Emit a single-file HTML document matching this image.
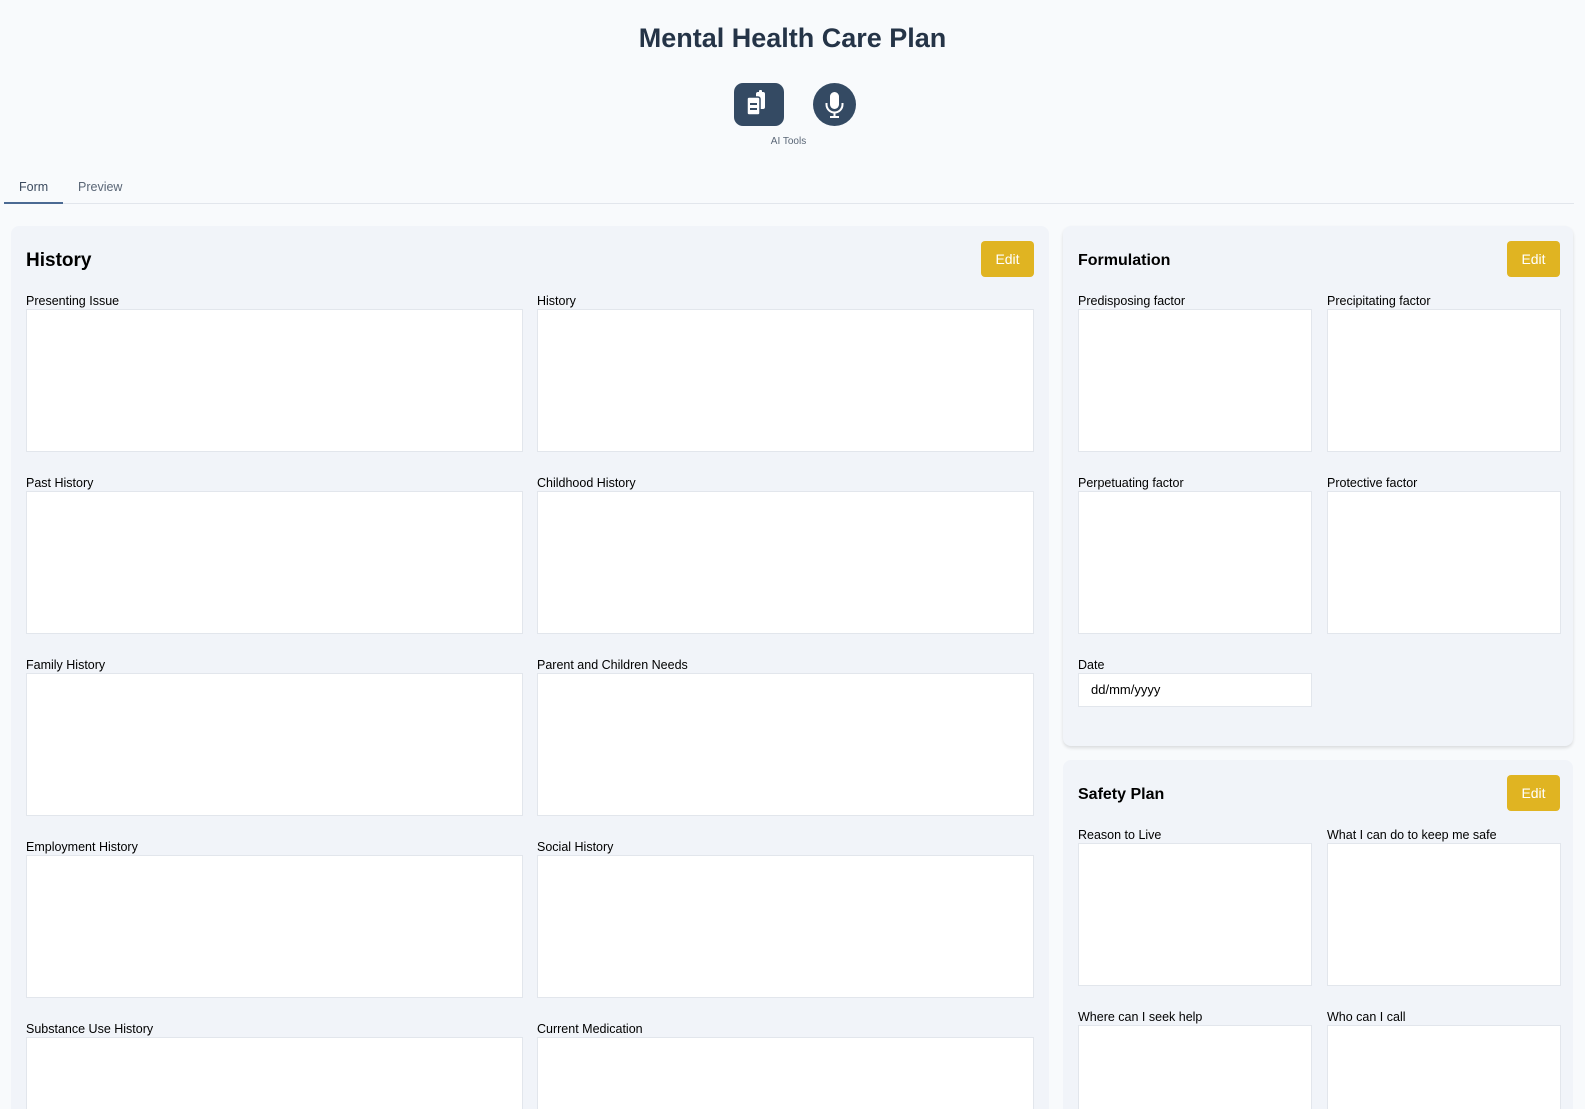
<!DOCTYPE html>
<html><head><meta charset="utf-8"><style>
*{box-sizing:border-box;margin:0;padding:0}
html,body{width:1585px;height:1109px;overflow:hidden}
body{background:#f8fafc;font-family:"Liberation Sans",sans-serif;color:#000}
#w{position:relative;width:1585px;height:1109px;overflow:hidden}
.a{position:absolute}
h1{position:absolute;left:0;width:1585px;text-align:center;top:20px;font-size:27px;font-weight:bold;color:#253447;line-height:36px}
.card{position:absolute;background:#f1f4f9;border-radius:8px}
.t{position:absolute;font-weight:bold;font-size:16px;line-height:20px}
.edit{position:absolute;width:53px;height:36px;background:#e0b422;color:#fff;border-radius:4px;font-size:14px;text-align:center;line-height:36px}
.lbl{position:absolute;font-size:12.5px;line-height:16px}
.box{position:absolute;background:#fff;border:1px solid #e2e6ec;height:143px}
</style></head><body><div id="w">
<h1>Mental Health Care Plan</h1>
<div class="a" style="left:734px;top:83px;width:50px;height:43px;background:#344a63;border-radius:9px">
<svg width="50" height="43" viewBox="0 0 50 43"><rect x="22" y="9" width="9" height="17" rx="2" fill="#fff"/><rect x="25" y="7" width="3" height="4" rx="1" fill="#fff"/><rect x="13" y="14" width="13" height="18" rx="2" fill="#fff" stroke="#344a63" stroke-width="1.5"/><rect x="16" y="20" width="7" height="2" fill="#344a63"/><rect x="16" y="25" width="7" height="2" fill="#344a63"/></svg></div>
<div class="a" style="left:813px;top:83px;width:43px;height:43px;background:#344a63;border-radius:50%">
<svg width="43" height="43" viewBox="0 0 43 43"><rect x="17" y="9" width="9" height="17" rx="4.5" fill="#fff"/><path d="M13.5 20v1.5a8 8 0 0 0 16 0V20" fill="none" stroke="#fff" stroke-width="2"/><path d="M21.5 29.5v4M17 34h9" stroke="#fff" stroke-width="2"/></svg></div>
<div class="a" style="left:0;width:1577px;text-align:center;top:136px;font-size:10px;color:#5a6676">AI Tools</div>
<div class="a" style="left:19px;top:180px;font-size:12.5px;color:#3b4a5e">Form</div>
<div class="a" style="left:78px;top:180px;font-size:12.5px;color:#5a6676">Preview</div>
<div class="a" style="left:4px;top:203px;width:1570px;height:1px;background:#e2e6ec"></div>
<div class="a" style="left:4px;top:202px;width:59px;height:2px;background:#4b6a93"></div>

<div class="card" style="left:11px;top:226px;width:1038px;height:950px"></div>
<div class="t" style="left:26px;top:249px;font-size:19px;line-height:24px">History</div>
<div class="edit" style="left:981px;top:241px">Edit</div>

<div class="lbl" style="left:26px;top:293px">Presenting Issue</div><div class="box" style="left:26px;top:309px;width:497px"></div>
<div class="lbl" style="left:537px;top:293px">History</div><div class="box" style="left:537px;top:309px;width:497px"></div>
<div class="lbl" style="left:26px;top:475px">Past History</div><div class="box" style="left:26px;top:491px;width:497px"></div>
<div class="lbl" style="left:537px;top:475px">Childhood History</div><div class="box" style="left:537px;top:491px;width:497px"></div>
<div class="lbl" style="left:26px;top:657px">Family History</div><div class="box" style="left:26px;top:673px;width:497px"></div>
<div class="lbl" style="left:537px;top:657px">Parent and Children Needs</div><div class="box" style="left:537px;top:673px;width:497px"></div>
<div class="lbl" style="left:26px;top:839px">Employment History</div><div class="box" style="left:26px;top:855px;width:497px"></div>
<div class="lbl" style="left:537px;top:839px">Social History</div><div class="box" style="left:537px;top:855px;width:497px"></div>
<div class="lbl" style="left:26px;top:1021px">Substance Use History</div><div class="box" style="left:26px;top:1037px;width:497px"></div>
<div class="lbl" style="left:537px;top:1021px">Current Medication</div><div class="box" style="left:537px;top:1037px;width:497px"></div>

<div class="card" style="left:1063px;top:226px;width:510px;height:520px;box-shadow:0 2px 3px rgba(0,0,0,0.12)"></div>
<div class="t" style="left:1078px;top:251px">Formulation</div>
<div class="edit" style="left:1507px;top:241px">Edit</div>
<div class="lbl" style="left:1078px;top:293px">Predisposing factor</div><div class="box" style="left:1078px;top:309px;width:234px"></div>
<div class="lbl" style="left:1327px;top:293px">Precipitating factor</div><div class="box" style="left:1327px;top:309px;width:234px"></div>
<div class="lbl" style="left:1078px;top:475px">Perpetuating factor</div><div class="box" style="left:1078px;top:491px;width:234px"></div>
<div class="lbl" style="left:1327px;top:475px">Protective factor</div><div class="box" style="left:1327px;top:491px;width:234px"></div>
<div class="lbl" style="left:1078px;top:657px">Date</div>
<div class="box" style="left:1078px;top:673px;width:234px;height:34px;font-size:13px;line-height:32px;padding-left:12px">dd/mm/yyyy</div>

<div class="card" style="left:1063px;top:760px;width:510px;height:420px"></div>
<div class="t" style="left:1078px;top:785px">Safety Plan</div>
<div class="edit" style="left:1507px;top:775px">Edit</div>
<div class="lbl" style="left:1078px;top:827px">Reason to Live</div><div class="box" style="left:1078px;top:843px;width:234px"></div>
<div class="lbl" style="left:1327px;top:827px">What I can do to keep me safe</div><div class="box" style="left:1327px;top:843px;width:234px"></div>
<div class="lbl" style="left:1078px;top:1009px">Where can I seek help</div><div class="box" style="left:1078px;top:1025px;width:234px"></div>
<div class="lbl" style="left:1327px;top:1009px">Who can I call</div><div class="box" style="left:1327px;top:1025px;width:234px"></div>
</div></body></html>
